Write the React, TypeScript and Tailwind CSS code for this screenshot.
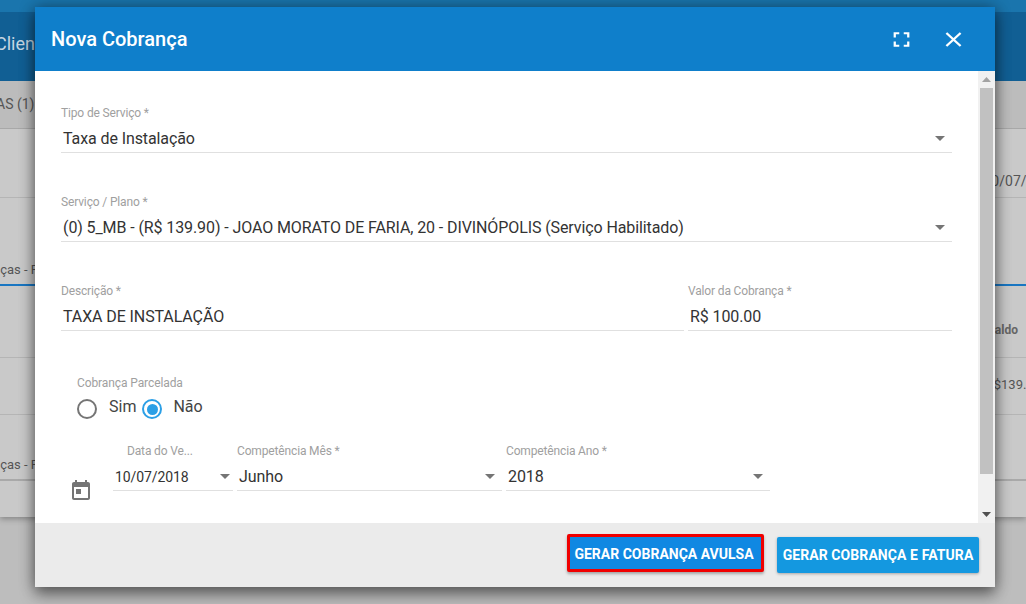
import React from "react";

const Arrow = () => (
  <svg width="10" height="5" viewBox="0 0 10 5">
    <path d="M0 0h10L5 5z" fill="#757575" />
  </svg>
);

function Field({
  label,
  value,
  arrow = true,
  className = "",
  labelClass = "",
  rowClass = "pr-[7px]",
  valueClass = "text-[16px]",
}: {
  label: string;
  value: string;
  arrow?: boolean;
  className?: string;
  labelClass?: string;
  rowClass?: string;
  valueClass?: string;
}) {
  return (
    <div className={`flex flex-col ${className}`}>
      <div className={`h-[14px] text-[12px] leading-[14px] tracking-[-0.15px] text-[#a0a0a0] whitespace-nowrap ${labelClass}`}>{label}</div>
      <div className={`mt-[3px] flex h-[30px] items-center justify-between border-b border-[#e0e0e0] pl-[2px] pt-[2px] ${rowClass}`}>
        <span className={`leading-[20px] tracking-[-0.1px] text-[#333333] whitespace-nowrap ${valueClass}`}>{value}</span>
        {arrow && <Arrow />}
      </div>
    </div>
  );
}

function Radio({ checked }: { checked?: boolean }) {
  return (
    <span
      className={`flex h-[20px] w-[20px] items-center justify-center rounded-full border-2 ${
        checked ? "border-[#2b9fe6]" : "border-[#757575]"
      }`}
    >
      {checked && <span className="h-[11px] w-[11px] rounded-full bg-[#2b9fe6]" />}
    </span>
  );
}

export default function App() {
  return (
    <div className="relative h-[604px] w-[1026px] overflow-hidden bg-[#bdbdbd] font-['Roboto',sans-serif] text-[#555555]">
      {/* Dimmed page behind the dialog */}
      <div className="flex h-[517px] flex-col bg-[#c9c9c9] shadow-[0_2px_6px_rgba(0,0,0,0.3)]">
        <div className="h-[12px] bg-[#1a75ad]" />
        <div className="flex h-[69px] items-center bg-[#115f94] pb-[6px] text-[18px] text-[#c5d6e2]">
          <span className="-ml-[5px]">Clien</span>
        </div>
        <div className="flex h-[48px] items-center border-b border-[#a8a8a8] bg-[#bcbcbc] text-[14px]">
          <span className="-ml-[4px] whitespace-nowrap">AS (1)</span>
        </div>
        <div className="flex h-[69px] items-center justify-end border-b border-[#b5b5b5] pt-[36px] text-[14px]">
          <span className="-mr-[32px]">10/07/2018</span>
        </div>
        <div className="flex h-[88px] items-end border-b-2 border-[#1976c2] pb-[5px] text-[13px]">
          <span className="-ml-[7px] whitespace-nowrap">nças - F</span>
        </div>
        <div className="flex h-[72px] items-end justify-end border-b border-[#b5b5b5] pb-[18px] pr-[8px] text-[12px] font-bold text-[#666666]">
          <span>Saldo</span>
        </div>
        <div className="flex h-[57px] items-center justify-end border-b border-[#b5b5b5] pb-[2px] text-[13px]">
          <span className="-mr-[15px] whitespace-nowrap">R$139.90</span>
        </div>
        <div className="flex h-[66px] items-end border-b-2 border-[#a9a9a9] pb-[5px] text-[13px]">
          <span className="-ml-[7px] whitespace-nowrap">nças - F</span>
        </div>
      </div>

      {/* Dialog */}
      <div className="absolute left-[35px] top-[7px] flex h-[580px] w-[960px] flex-col bg-white shadow-[0_8px_14px_rgba(0,0,0,0.4),0_0_14px_rgba(0,0,0,0.35)]">
        <header className="flex h-[64px] shrink-0 items-center justify-between bg-[#0f7fcb] pl-[16px] pr-[28px] text-white">
          <h2 className="text-[20px] font-medium leading-[24px]">Nova Cobrança</h2>
          <div className="flex items-center gap-[25px]">
            <svg width="27" height="25" viewBox="0 0 24 24" preserveAspectRatio="none" fill="#ffffff">
              <path d="M7 14H5v5h5v-2H7v-3zm-2-4h2V7h3V5H5v5zm12 7h-3v2h5v-5h-2v3zM14 5v2h3v3h2V5h-5z" />
            </svg>
            <svg width="27" height="25" viewBox="0 0 24 24" preserveAspectRatio="none" fill="#ffffff">
              <path d="M19 6.41 17.59 5 12 10.59 6.41 5 5 6.41 10.59 12 5 17.59 6.41 19 12 13.41 17.59 19 19 17.59 13.41 12z" />
            </svg>
          </div>
        </header>

        <div className="flex min-h-0 flex-1">
          <div className="flex min-w-0 flex-1 flex-col overflow-hidden pl-[26px] pr-[26px] pt-[35px]">
            <Field label="Tipo de Serviço *" value="Taxa de Instalação" />
            <Field
              className="mt-[42px]"
              label="Serviço / Plano *"
              value="(0) 5_MB - (R$ 139.90) - JOAO MORATO DE FARIA, 20 - DIVINÓPOLIS (Serviço Habilitado)"
            />
            <div className="mt-[42px] flex gap-[4px]">
              <Field className="w-[623px]" label="Descrição *" value="TAXA DE INSTALAÇÃO" arrow={false} />
              <Field className="w-[264px]" label="Valor da Cobrança *" value="R$ 100.00" arrow={false} />
            </div>
            <div className="ml-[16px] mt-[45px]">
              <div className="text-[12px] leading-[14px] tracking-[-0.1px] text-[#a0a0a0]">Cobrança Parcelada</div>
              <div className="mt-[7px] flex h-[24px] items-center text-[16px] text-[#444444]">
                <Radio />
                <span className="ml-[12px] -mt-[4px]">Sim</span>
                <span className="ml-[6px]"><Radio checked /></span>
                <span className="ml-[11px] -mt-[4px]">Não</span>
              </div>
            </div>
            <div className="mt-[23px] flex items-end gap-[4px]">
              <svg width="24" height="24" viewBox="0 0 24 24" fill="#757575" className="ml-[8px] mr-[16px] mb-[-12px] shrink-0">
                <path d="M19 3h-1V1h-2v2H8V1H6v2H5c-1.11 0-1.99.9-1.99 2L3 19c0 1.1.89 2 2 2h14c1.1 0 2-.9 2-2V5c0-1.1-.9-2-2-2zm0 16H5V8h14v11zM7 10h5v5H7z" />
              </svg>
              <Field
                className="w-[120px]"
                labelClass="pl-[14px]"
                rowClass="pr-[3px]"
                valueClass="text-[14px]"
                label="Data do Ve..."
                value="10/07/2018"
              />
              <Field className="w-[265px]" label="Competência Mês *" value="Junho" />
              <Field className="w-[264px]" label="Competência Ano *" value="2018" />
            </div>
          </div>

          {/* Scroll bar */}
          <div className="flex w-[17px] shrink-0 flex-col items-center bg-[#f1f1f1]">
            <svg width="9" height="5" viewBox="0 0 9 5" className="mt-[6px]"><path d="M0 5h9L4.5 0z" fill="#a3a3a3" /></svg>
            <div className="mt-[6px] h-[386px] w-[13px] bg-[#c1c1c1]" />
            <svg width="9" height="5" viewBox="0 0 9 5" className="mt-auto mb-[6px]"><path d="M0 0h9L4.5 5z" fill="#505050" /></svg>
          </div>
        </div>

        <footer className="flex h-[64px] shrink-0 items-start justify-end gap-[13px] bg-[#ebebeb] pr-[16px] pt-[14px] text-[14px] font-bold text-white">
          <button className="-mt-[3px] flex h-[38px] w-[197px] items-center justify-center whitespace-nowrap rounded-[2px] border-[3px] border-[#f00000] bg-[#1088e2] pt-[2px] pr-[3px] shadow-[0_2px_3px_rgba(0,0,0,0.3)]">
            GERAR COBRANÇA AVULSA
          </button>
          <button className="flex h-[36px] w-[202px] items-center justify-center whitespace-nowrap rounded-[2px] bg-[#1498e0] tracking-[0.08px] shadow-[0_1px_3px_rgba(0,0,0,0.3)]">
            GERAR COBRANÇA E FATURA
          </button>
        </footer>
      </div>
    </div>
  );
}
